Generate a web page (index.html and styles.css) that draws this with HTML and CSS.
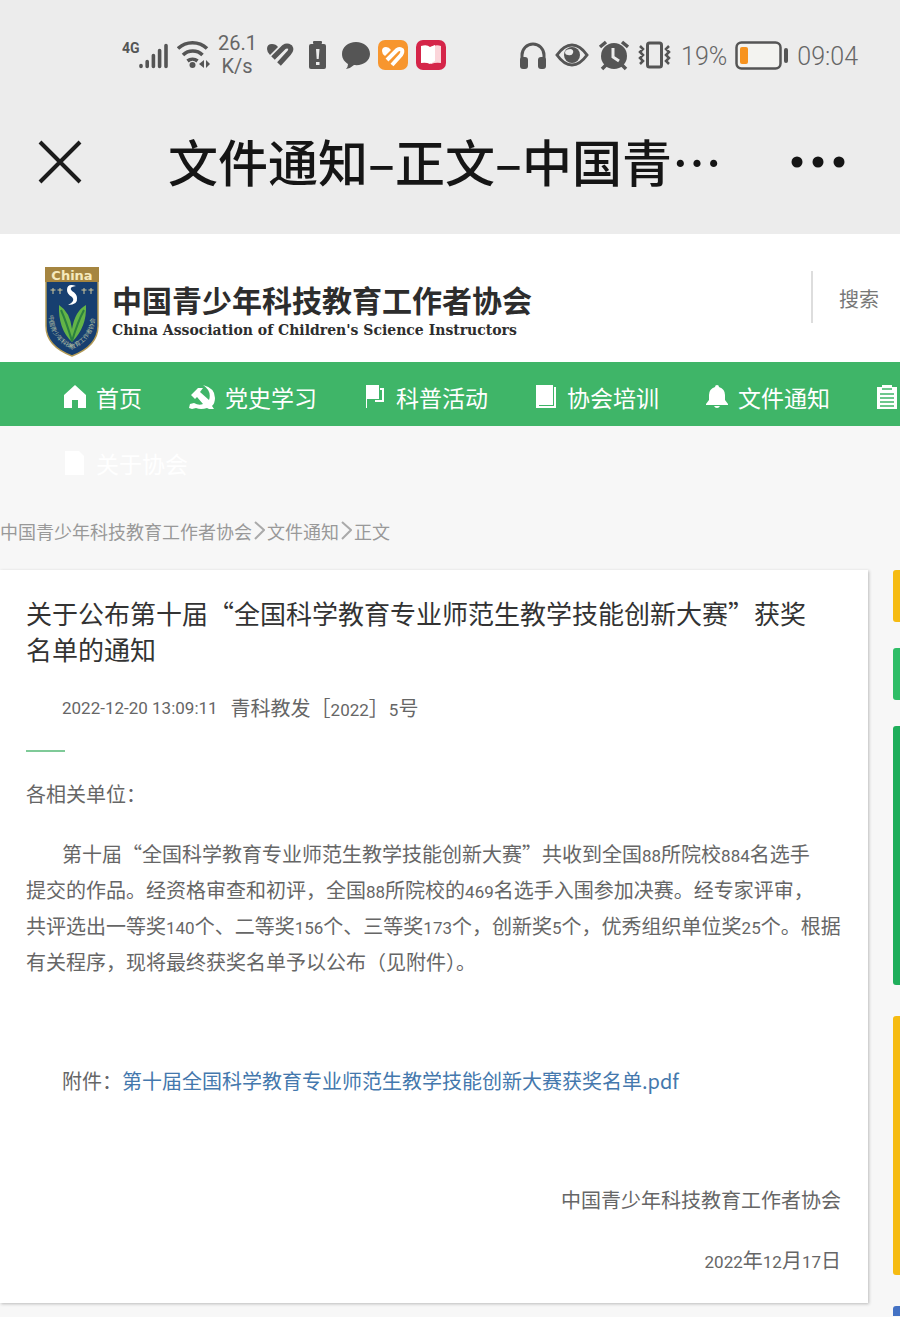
FILE: index.html
```html
<!DOCTYPE html>
<html lang="zh-CN">

<head>
    <meta charset="UTF-8">
    <meta name="viewport" content="width=device-width, initial-scale=1.0">
    <title>文件通知-正文-中国青少年科技教育工作者协会</title>
    <link rel="stylesheet" href="styles.css">
</head>

<body>
    <div class="phone-top">
        <div class="status-bar">
            <svg width="47" height="36" viewBox="0 0 47 36" fill="#555">
                <text x="0" y="16" class="net-label">4G</text>
                <g stroke="#555" stroke-width="3.6" stroke-linecap="round">
                    <path d="M19 29.500v-1M25.200 29.500v-5M31.400 29.500v-11M37.600 29.500v-16M44 29.500v-21" />
                </g>
            </svg>
            <svg width="33" height="36" viewBox="0 0 33 36" fill="none" stroke="#555" stroke-width="3.600">
                <path d="M1 11.500a21 21 0 0 1 29 0M6 18a14 14 0 0 1 19.500 0M10.500 24a8 8 0 0 1 10 0" />
                <circle cx="15.500" cy="28" r="3" fill="#555" stroke="none" />
                <path d="M27 23v8l-5-4zM29 23v8l4-4z" fill="#555" stroke="none" />
            </svg>
            <div class="speed">26.1<br>K/s</div>
            <svg width="32" height="36" viewBox="0 0 32 36">
                <path d="M3 12q0-5 5-5 4 0 6 3l-8 8q-3-3-3-6z" fill="#555" />
                <path d="M9 21l11-11q3-2 6 0 2 3-1 6L15 27" fill="none" stroke="#555" stroke-width="5" stroke-linejoin="round" />
            </svg>
            <svg width="30" height="36" viewBox="0 0 30 36">
                <rect x="5" y="7" width="17" height="25" rx="2" fill="#555" />
                <rect x="9" y="4" width="9" height="3" rx="1" fill="#555" />
                <path d="M12 12h3.500l-.8 10h-2zM12 25h3.500v3H12z" fill="#ececec" />
            </svg>
            <svg width="28" height="36" viewBox="0 0 28 36" fill="#555">
                <path d="M14 5C6 5 0 10 0 17c0 5 3 8 6 10q0 3-2 5 5-1 8-4C21 29 28 24 28 17S22 5 14 5z" />
            </svg>
            <svg width="30" height="36" viewBox="0 0 30 36">
                <rect y="3" width="30" height="30" rx="7" fill="#f7962f" />
                <path d="M4 14q0-4 4-4 3 0 5 3l-6 6q-3-2-3-5z" fill="#fff" />
                <path d="M9 23l10-10q3-2 5 0 1 2-1 5l-9 10" fill="none" stroke="#fff" stroke-width="4" stroke-linejoin="round" />
            </svg>
            <svg width="30" height="36" viewBox="0 0 30 36">
                <rect y="3" width="30" height="30" rx="7" fill="#d52549" />
                <path d="M5 9q6-2 9 1v17q-4-2-9-1z" fill="#fff" />
                <path d="M15 10q5-3 10-1v17q-5-1-10 1z" fill="#fbd5da" />
                <path d="M14 10l5-2v16l-5 3z" fill="#fff" />
            </svg>
            <div class="status-right">
                <svg width="28" height="36" viewBox="0 0 28 36">
                    <path d="M3 26v-8a11 11 0 0 1 22 0v8" fill="none" stroke="#555" stroke-width="3" />
                    <rect x="1" y="20" width="8" height="12" rx="3" fill="#555" />
                    <rect x="19" y="20" width="8" height="12" rx="3" fill="#555" />
                </svg>
                <svg width="34" height="36" viewBox="0 0 34 36">
                    <path d="M2 18q7-10 15-10t15 10q-7 10-15 10T2 18z" fill="none" stroke="#555" stroke-width="3" />
                    <circle cx="17" cy="18" r="8" fill="#555" />
                    <path d="M16 12q3 1 2 4t-5 2q-3 0-3-3 1-3 6-3z" fill="#ececec" />
                </svg>
                <svg width="32" height="36" viewBox="0 0 32 36">
                    <circle cx="17" cy="19" r="13" fill="#555" />
                    <path d="M3 10l6-5M31 10l-6-5M9 28l-4 4M25 28l4 4" stroke="#555" stroke-width="3.500" />
                    <path d="M16 11v9l6 4" fill="none" stroke="#ececec" stroke-width="3" />
                </svg>
                <svg width="36" height="36" viewBox="0 0 36 36" fill="none" stroke="#555" stroke-width="3">
                    <rect x="10.500" y="6" width="14" height="24" rx="2" />
                    <path d="M3 9l3 3-3 3 3 3-3 3 3 3-3 3M32 9l-3 3 3 3-3 3 3 3-3 3 3 3" stroke-width="2.500" />
                </svg>
                <span class="status-text">19%</span>
                <svg width="54" height="36" viewBox="0 0 54 36">
                    <rect x="1.500" y="5.500" width="44" height="26" rx="5" fill="#f3f3f0" stroke="#555" stroke-width="2.500" />
                    <rect x="5" y="10" width="8" height="17" rx="2" fill="#f7931e" />
                    <rect x="49" y="11" width="4" height="15" rx="2" fill="#555" />
                </svg>
                <span class="status-text">09:04</span>
            </div>
        </div>
        <div class="title-bar">
            <button class="icon-button" aria-label="关闭">
                <svg width="44" height="44" viewBox="0 0 44 44" stroke="#1c1c1c" stroke-width="4">
                    <path d="M2 2l40 40M42 2L2 42" />
                </svg>
            </button>
            <div class="window-title">文件通知–正文–中国青…</div>
            <button class="icon-button menu-button" aria-label="更多">
                <svg width="56" height="44" viewBox="0 0 56 44" fill="#151515">
                    <circle cx="7" cy="22" r="5.500" />
                    <circle cx="28" cy="22" r="5.500" />
                    <circle cx="49" cy="22" r="5.500" />
                </svg>
            </button>
        </div>
    </div>

    <header class="site-header">
        <a href="#" class="brand">
            <svg width="54" height="90" viewBox="0 0 54 90">
                <path d="M1 1h52v58q0 20-26 30Q1 79 1 59z" fill="#173f70" stroke="#b39a55" stroke-width="1.500" />
                <path d="M0 0h54v15H0z" fill="#a58540" />
                <text x="27" y="13" text-anchor="middle" class="emblem-title">China</text>
                <path d="M31 19q-9-3-9 4 0 4 5 7 4 4-4 8 10 0 9-7 0-4-5-7-4-4 4-5z" fill="#fff" />
                <path d="M27 75Q13 62 14 38q11 7 13 24Q30 44 41 38q1 22-14 37z" fill="#63b447" />
                <path d="M27 74Q21 54 16 43M27 74Q33 54 39 43" fill="none" stroke="#2b8040" stroke-width="2" />
                <g stroke="#d2c99b" stroke-width="1">
                    <path d="M8 21v6M5.500 23h5M15 21v6M12.500 23h5M39 21v6M36.500 23h5M46 21v6M43.500 23h5" />
                </g>
                <path id="rim" d="M4 48q0 24 23 34 23-10 23-34" fill="none" />
                <text class="emblem-rim"><textPath href="#rim">中国青少年科技教育工作者协会</textPath></text>
            </svg>
            <span class="brand-text">
                <span class="brand-zh">中国青少年科技教育工作者协会</span>
                <span class="brand-en">China Association of Children's Science Instructors</span>
            </span>
        </a>
        <input type="search" class="search" placeholder="搜索" aria-label="搜索">
    </header>

    <nav>
        <div class="nav-row nav-main">
            <a href="#">
                <svg width="22" height="24" viewBox="0 0 22 24" fill="#fff"><path d="M11 0L0 10v13h8v-8h6v8h8V10z" /></svg>首页
            </a>
            <a href="#">
                <svg width="26" height="24" viewBox="0 0 26 24" fill="#fff">
                    <path d="M14 0q12 3 12 13 0 5-3 8l2 3h-5l-2-1q-6 2-11 0l-4 1-3-1 1-4 4-1q5 3 9 1l-6-7-2 2-4-4 7-7h5l-3 4 9 8q3-9-6-15z" />
                </svg>党史学习
            </a>
            <a href="#">
                <svg width="22" height="24" viewBox="0 0 22 24" fill="#fff">
                    <path d="M2 0h13v14H3v9H2zM16 3h4v14h-9v-2h7V5h-2z" />
                </svg>科普活动
            </a>
            <a href="#">
                <svg width="22" height="24" viewBox="0 0 22 24" fill="#fff">
                    <path d="M1 0h17v20H4v1h15V2h2v21H1z" />
                </svg>协会培训
            </a>
            <a href="#">
                <svg width="22" height="24" viewBox="0 0 22 24" fill="#fff">
                    <path d="M11 0q2 0 2 2 6 2 6 8v5l3 4v1H0v-1l3-4v-5q0-6 6-8 0-2 2-2zM8 21h6q-1 2-3 2t-3-2z" />
                </svg>文件通知
            </a>
            <a href="#" aria-label="更多栏目">
                <svg width="22" height="24" viewBox="0 0 22 24">
                    <path d="M0 2h5V0h10v2h5v22H0z" fill="#fff" />
                    <path d="M5 4h10M3 9h14M3 13h14M3 17h14M3 21h14" stroke="#3fb568" stroke-width="1.500" />
                </svg>
            </a>
        </div>
        <div class="nav-row nav-more">
            <a href="#">
                <svg width="22" height="24" viewBox="0 0 22 24" fill="#fff"><path d="M1 0h14l5 5v19H1z" /></svg>关于协会
            </a>
        </div>
    </nav>

    <div class="breadcrumb">
        <a href="#">中国青少年科技教育工作者协会</a>
        <svg width="11" height="20" viewBox="0 0 11 20"><path d="M1 1l9 8-9 9" /></svg>
        <a href="#">文件通知</a>
        <svg width="11" height="20" viewBox="0 0 11 20"><path d="M1 1l9 8-9 9" /></svg>
        <span>正文</span>
    </div>

    <div class="content">
        <article class="card">
            <h1>关于公布第十届“全国科学教育专业师范生教学技能创新大赛”获奖<br>名单的通知</h1>
            <div class="meta">
                <span class="num">2022-12-20 13:09:11</span>
                <span>青科教发［<span class="num">2022</span>］<span class="num">5</span>号</span>
            </div>
            <hr>
            <p>各相关单位：</p>
            <p class="indent">第十届“全国科学教育专业师范生教学技能创新大赛”共收到全国<span class="num">88</span>所院校<span class="num">884</span>名选手<br>提交的作品。经资格审查和初评，全国<span class="num">88</span>所院校的<span class="num">469</span>名选手入围参加决赛。经专家评审，<br>共评选出一等奖<span class="num">140</span>个、二等奖<span class="num">156</span>个、三等奖<span class="num">173</span>个，创新奖<span class="num">5</span>个，优秀组织单位奖<span class="num">25</span>个。根据<br>有关程序，现将最终获奖名单予以公布（见附件）。</p>
            <p class="indent spaced">附件：<a href="#">第十届全国科学教育专业师范生教学技能创新大赛获奖名单.pdf</a></p>
            <p class="sign spaced">中国青少年科技教育工作者协会</p>
            <p class="sign"><span class="num">2022</span>年<span class="num">12</span>月<span class="num">17</span>日</p>
        </article>
        <aside class="sidebar">
            <div class="block yellow"></div>
            <div class="block light-green"></div>
            <div class="block tall green"></div>
            <div class="block tall yellow"></div>
            <div class="block blue"></div>
        </aside>
    </div>
</body>

</html>
```
FILE: styles.css
```css
* {
    box-sizing: border-box;
}

body {
    margin: 0;
    background-color: #f7f7f7;
    color: #666;
    font-family: "Noto Sans CJK SC", sans-serif;
    font-size: 20px;
    overflow-x: hidden;
}

a {
    color: inherit;
    text-decoration: none;
}

svg {
    display: block;
    flex-shrink: 0;
}

.phone-top {
    background-color: #ececec;
}

.status-bar {
    display: flex;
    align-items: center;
    gap: 8px;
    height: 90px;
    padding: 20px 42px 0 122px;
    color: #666;
    font-family: Roboto, sans-serif;
    white-space: nowrap;
}

.net-label {
    font-size: 14px;
    font-weight: 700;
}

.speed {
    width: 38px;
    font-size: 20px;
    line-height: 23px;
    text-align: center;
}

.status-right {
    display: flex;
    align-items: center;
    gap: 8px;
    margin-left: auto;
}

.status-text {
    padding-top: 2px;
    font-size: 25px;
    font-weight: 300;
}

.title-bar {
    display: flex;
    align-items: center;
    height: 144px;
    padding: 0 54px 0 38px;
}

.icon-button {
    padding: 0;
    border: none;
    background: none;
    cursor: pointer;
}

.window-title {
    margin-left: 86px;
    padding-bottom: 4px;
    color: #151515;
    font-size: 50px;
    font-weight: 500;
    line-height: 72px;
    white-space: nowrap;
}

.menu-button {
    margin-left: auto;
}

.site-header {
    display: flex;
    align-items: flex-start;
    justify-content: space-between;
    height: 128px;
    padding: 33px 0 0 45px;
    background-color: #fff;
}

.brand {
    display: flex;
    gap: 13px;
    color: #2d2d2d;
    white-space: nowrap;
}

.emblem-title {
    fill: #f5e9bd;
    font-family: "DejaVu Sans", sans-serif;
    font-size: 13px;
    font-weight: 700;
}

.emblem-rim {
    fill: #b3bfa4;
    font-size: 6px;
}

.brand-text {
    display: flex;
    flex-direction: column;
    padding-top: 14px;
}

.brand-zh {
    font-size: 30px;
    font-weight: 700;
    line-height: 36px;
}

.brand-en {
    font-family: "DejaVu Serif", serif;
    font-size: 14px;
    font-weight: 700;
    line-height: 26px;
}

.search {
    width: 89px;
    height: 52px;
    margin-top: 4px;
    padding: 2px 0 0 26px;
    border: none;
    border-left: 2px solid #ddd;
    background: none;
    font-family: inherit;
    font-size: 20px;
}

.search::placeholder {
    color: #777;
}

.nav-row {
    display: flex;
    gap: 47px;
    height: 64px;
    padding-left: 64px;
    overflow: hidden;
    color: #fff;
    font-size: 23px;
    white-space: nowrap;
}

.nav-row a {
    display: flex;
    flex-shrink: 0;
    align-items: center;
    gap: 10px;
    padding-top: 6px;
}

.nav-main {
    background-color: #3fb568;
}

.nav-more {
    margin-top: 2px;
}

.breadcrumb {
    display: flex;
    align-items: center;
    gap: 2px;
    height: 78px;
    color: #999;
    font-size: 18px;
    white-space: nowrap;
}

.breadcrumb path {
    fill: none;
    stroke: #aaa;
    stroke-width: 2;
}

.content {
    display: flex;
    gap: 25px;
}

.card {
    flex: 1;
    margin-bottom: 13px;
    padding: 25px 27px 0 26px;
    background-color: #fff;
    box-shadow: 1px 1px 3px #bbb;
}

h1 {
    margin: 0;
    color: #333;
    font-size: 26px;
    font-weight: 400;
    line-height: 36px;
    white-space: nowrap;
}

.meta {
    display: flex;
    align-items: center;
    gap: 13px;
    margin-top: 23px;
    padding-left: 36px;
    line-height: 36px;
}

.num {
    font-family: Roboto, sans-serif;
    font-size: 17px;
    line-height: 20px;
}

hr {
    width: 39px;
    height: 2px;
    margin: 24px 0;
    border: none;
    background-color: #7fca98;
}

p {
    margin: 0 0 24px;
    line-height: 36px;
}

.indent {
    text-indent: 36px;
    white-space: nowrap;
}

.indent a {
    color: #4478ad;
}

.spaced {
    margin-top: 83px;
}

.sign {
    text-align: right;
}

.sidebar {
    display: flex;
    flex-direction: column;
    flex-shrink: 0;
    gap: 26px;
    width: 7px;
}

.block {
    height: 52px;
    border-radius: 3px 0 0 3px;
}

.tall {
    height: 259px;
    margin-bottom: 5px;
}

.yellow {
    background-color: #f6bb12;
}

.light-green {
    background-color: #2fbd67;
}

.green {
    background-color: #1fae5b;
}

.blue {
    flex: 1;
    min-height: 10px;
    background-color: #4472c4;
    border-radius: 3px 0 0 0;
}
```
